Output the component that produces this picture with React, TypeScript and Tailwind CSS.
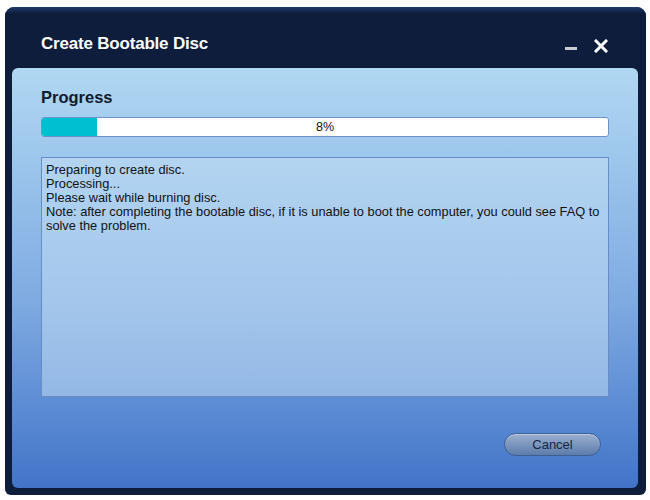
import React from 'react';

const logLines = [
  'Preparing to create disc.',
  'Processing...',
  'Please wait while burning disc.',
  'Note: after completing the bootable disc, if it is unable to boot the computer, you could see FAQ to solve the problem.',
];

export default function App() {
  const percent = 8;

  return (
    <div className="w-[650px] h-[500px] bg-white pt-[7px] pl-[5px]" style={{ fontFamily: '"Liberation Sans", Arial, sans-serif' }}>
      <div className="w-[641px] h-[488px] rounded-t-[9px] rounded-b-[6px] bg-[#0d1d3b] flex flex-col overflow-hidden">
        {/* title bar */}
        <div className="h-[61px] relative bg-gradient-to-b from-[#1f3a6b] from-[0px] to-[#0d1d3b] to-[7px] flex items-start">
          <h1 className="ml-[36px] mt-[24px] text-white text-[17px] font-bold tracking-[-0.2px]">Create Bootable Disc</h1>
          <div className="ml-auto mr-[38px] mt-[30px] flex items-center gap-[17px]">
            <div className="w-[12px] h-[3px] bg-[#c9ccd3] mt-[6px]" />
            <svg width="14" height="14" viewBox="0 0 14 14" className="mt-[2px]">
              <path d="M2 2 L12 12 M12 2 L2 12" stroke="#ffffff" strokeWidth="3" strokeLinecap="square" />
            </svg>
          </div>
        </div>

        {/* body panel */}
        <div className="ml-[7px] mr-[8px] mb-[7px] flex-1 rounded-[6px] bg-gradient-to-b from-[#b0d8f2] via-[#80abe2] via-55% to-[#4174c8] px-[29px] pt-[19px] flex flex-col">
          <h2 className="text-[16.5px] font-bold text-[#111a2e] leading-[20px]">Progress</h2>

          <div className="mt-[10px] h-[20px] rounded-[3px] border border-[#6f93c9] bg-white relative overflow-hidden">
            <div className="h-full bg-[#00bfd0]" style={{ width: `${(55 / 567) * 100}%` }} />
            <div className="absolute inset-0 flex items-center justify-center text-[12.5px] text-[#111]">{percent}%</div>
          </div>

          <div className="mt-[20px] h-[240px] border border-[#6a8cc6] bg-[#c8e2f6]/50 pl-[4px] pr-[1px] pt-[5px] text-[12.8px] leading-[14px] text-[#111]">
            {logLines.map((line, i) => (
              <div key={i}>{line}</div>
            ))}
          </div>

          <div className="mt-[36px] flex justify-end pr-[8px]">
            <button className="w-[97px] h-[23px] rounded-full border border-[#3e5f92] bg-gradient-to-b from-[#9bb0cf] to-[#5d7cab] text-[13px] text-[#15264a] shadow-[inset_0_1px_0_rgba(255,255,255,0.35)]">
              Cancel
            </button>
          </div>
        </div>
      </div>
    </div>
  );
}
